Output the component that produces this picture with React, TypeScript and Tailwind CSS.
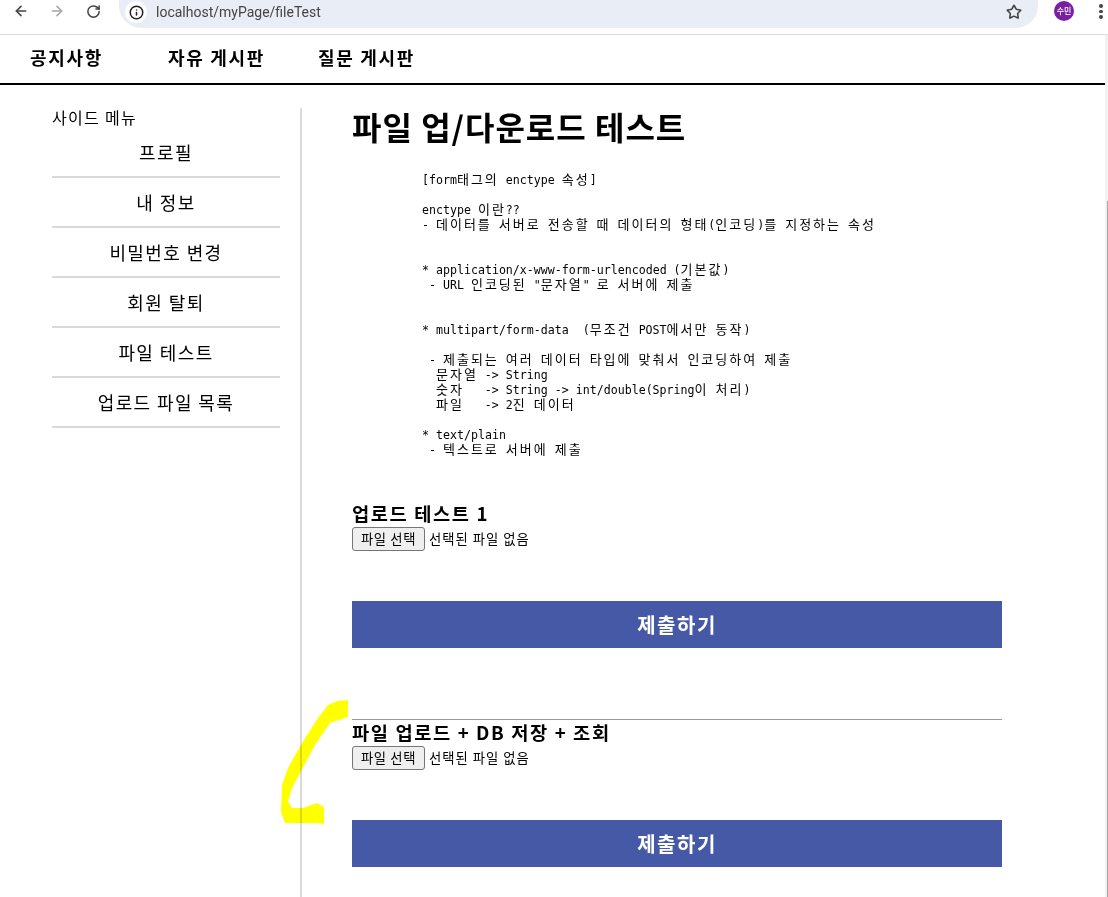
import { ArrowLeft, ArrowRight, Info, RotateCw, Star } from "lucide-react";

const sideItems = ["프로필", "내 정보", "비밀번호 변경", "회원 탈퇴", "파일 테스트", "업로드 파일 목록"];

const preLines = [
  "[form태그의 enctype 속성]",
  "",
  "enctype 이란??",
  "- 데이터를 서버로 전송할 때 데이터의 형태(인코딩)를 지정하는 속성",
  "",
  "",
  "* application/x-www-form-urlencoded (기본값)",
  " - URL 인코딩된 \"문자열\" 로 서버에 제출",
  "",
  "",
  "* multipart/form-data  (무조건 POST에서만 동작)",
  "",
  " - 제출되는 여러 데이터 타입에 맞춰서 인코딩하여 제출",
  "  문자열 -> String",
  "  숫자   -> String -> int/double(Spring이 처리)",
  "  파일   -> 2진 데이터",
  "",
  "* text/plain",
  " - 텍스트로 서버에 제출",
];

// hangul is twice the latin cell in the mono block
function PreLine({ text }: { text: string }) {
  const parts = text.split(/([가-힣]+)/);
  return (
    <div className="h-[15px] whitespace-pre text-[13px] leading-[15px] tracking-[2px]">
      {parts.map((part, i) =>
        /[가-힣]/.test(part) ? (
          <span key={i}>{part}</span>
        ) : (
          <span key={i} className="font-['DejaVu_Sans_Mono',monospace] text-[11.62px] tracking-normal">
            {part}
          </span>
        ),
      )}
    </div>
  );
}

function FilePicker() {
  return (
    <div className="flex items-center text-[13.33px] leading-none">
      <button className="h-6 w-[73px] rounded-[3px] border border-[#767676] bg-[#efefef] text-center tracking-[0.6px] text-black">
        파일 선택
      </button>
      <span className="ml-1 tracking-[1px] text-black">선택된 파일 없음</span>
    </div>
  );
}

function UploadForm({ title }: { title: string }) {
  return (
    <form>
      <h3 className="h-[26px] text-[18.7px] font-bold leading-[24px] tracking-[1.6px] text-black">{title}</h3>
      <FilePicker />
      <button
        type="button"
        className="mt-[50px] h-[47px] w-[650px] bg-[#4559a6] text-center text-[20px] font-bold tracking-[1.5px] text-white"
      >
        제출하기
      </button>
    </form>
  );
}

export default function App() {
  return (
    <div className="relative h-[897px] w-[1108px] overflow-hidden bg-white font-['Noto_Sans_CJK_KR','Liberation_Sans',sans-serif] text-black">
      <header className="flex h-[35px] items-start border-b border-[#dedede] bg-white">
        <div className="flex h-[22px] w-[119px] items-center pl-[13px] text-[#444]">
          <ArrowLeft size={16} strokeWidth={2.4} />
          <ArrowRight size={16} strokeWidth={2.4} className="ml-5 text-[#a8a8a8]" />
          <RotateCw size={15} strokeWidth={2.4} className="ml-[21px]" />
        </div>
        <div className="flex h-7 w-[919px] items-center rounded-b-[22px] bg-[#e9edf6] pb-1">
          <span className="ml-[6px] flex h-[22px] w-[22px] items-center justify-center rounded-full bg-white">
            <Info size={15} strokeWidth={2.4} className="text-[#222]" />
          </span>
          <span className="ml-[9px] font-['Roboto',sans-serif] text-[14px] text-[#444]">localhost/myPage/fileTest</span>
          <Star size={16} strokeWidth={2.4} className="ml-auto mr-4 text-[#444]" />
        </div>
        <span className="ml-4 mt-[1px] flex h-5 w-5 items-center justify-center rounded-full bg-[#7a1fa2] text-[8px] font-medium text-white">
          수민
        </span>
        <div className="ml-[25px] mt-1 flex flex-col gap-[2px]">
          <span className="h-[3.5px] w-[3.5px] rounded-full bg-[#444]" />
          <span className="h-[3.5px] w-[3.5px] rounded-full bg-[#444]" />
          <span className="h-[3.5px] w-[3.5px] rounded-full bg-[#444]" />
        </div>
      </header>

      <div className="flex h-[862px]">
        <div className="w-[1105px]">
          <nav className="flex h-[50px] items-center border-b-2 border-black pb-[3px] text-[18px] font-bold tracking-[1.7px]">
            <a className="ml-[30px] w-[71px] whitespace-nowrap">공지사항</a>
            <a className="ml-[67px] w-[95px] whitespace-nowrap">자유 게시판</a>
            <a className="ml-[55px] w-[95px] whitespace-nowrap">질문 게시판</a>
          </nav>

          <div className="flex pt-[23px]">
            <aside className="ml-[52px] w-[228px]">
              <div className="h-5 text-[16px] leading-[18px] tracking-[1.3px]">사이드 메뉴</div>
              <ul>
                {sideItems.map((item) => (
                  <li
                    key={item}
                    className="flex h-[50px] items-center justify-center border-b-2 border-[#dadada] text-[18px] tracking-[1.4px]"
                  >
                    {item}
                  </li>
                ))}
              </ul>
            </aside>

            <main className="ml-5 h-[790px] w-[705px] border-l-2 border-[#dadada] pl-[50px]">
              <h1 className="h-[40px] text-[32px] font-bold leading-[36px] tracking-[1px]">파일 업/다운로드 테스트</h1>
              <div className="ml-[70px] mt-[23px]">
                {preLines.map((line, i) => (
                  <PreLine key={i} text={line} />
                ))}
              </div>
              <div className="mt-[45px]">
                <UploadForm title="업로드 테스트 1" />
              </div>
              <hr className="mt-[71px] w-[650px] border-t border-[#999]" />
              <UploadForm title="파일 업로드 + DB 저장 + 조회" />
            </main>
          </div>
        </div>

        <div className="relative w-[3px] bg-[#f1f1f1]">
          <div className="absolute bottom-0 right-0 top-[166px] w-[1px] bg-[#a8a8a8]" />
        </div>
      </div>

      {/* highlighter mark drawn over the page */}
      <svg className="pointer-events-none absolute left-0 top-0 mix-blend-multiply" width="1108" height="897">
        <path
          d="M348 700 L338 700.7 L328 705 L318 718 L302 743 L288 768 L282 785 L281 812 L285 823 L315 823 L324 824 L324 807 L317 803 L303 808 L292 808 L288 801 L292 788 L300 773 L315 745 L330 723 L348 717 Z"
          fill="#ffff00"
        />
      </svg>
    </div>
  );
}
